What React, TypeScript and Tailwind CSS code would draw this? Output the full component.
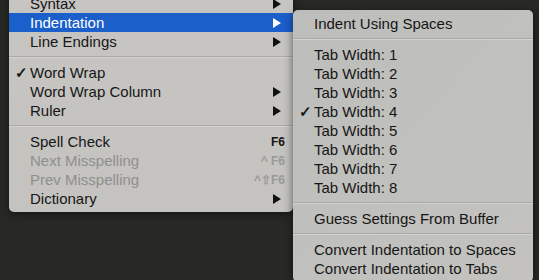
import type { ReactNode } from 'react';

type Item =
  | { kind: 'sep' }
  | {
      kind: 'item';
      label: string;
      checked?: boolean;
      active?: boolean;
      disabled?: boolean;
      submenu?: boolean;
      shortcut?: ReactNode;
    };

const mainItems: Item[] = [
  { kind: 'item', label: 'Syntax', submenu: true },
  { kind: 'item', label: 'Indentation', submenu: true, active: true },
  { kind: 'item', label: 'Line Endings', submenu: true },
  { kind: 'sep' },
  { kind: 'item', label: 'Word Wrap', checked: true },
  { kind: 'item', label: 'Word Wrap Column', submenu: true },
  { kind: 'item', label: 'Ruler', submenu: true },
  { kind: 'sep' },
  { kind: 'item', label: 'Spell Check', shortcut: 'F6' },
  { kind: 'item', label: 'Next Misspelling', disabled: true, shortcut: '^ F6' },
  { kind: 'item', label: 'Prev Misspelling', disabled: true, shortcut: '^⇧F6' },
  { kind: 'item', label: 'Dictionary', submenu: true },
];

const subItems: Item[] = [
  { kind: 'item', label: 'Indent Using Spaces' },
  { kind: 'sep' },
  ...[1, 2, 3, 4, 5, 6, 7, 8].map(
    (n): Item => ({ kind: 'item', label: `Tab Width: ${n}`, checked: n === 4 }),
  ),
  { kind: 'sep' },
  { kind: 'item', label: 'Guess Settings From Buffer' },
  { kind: 'sep' },
  { kind: 'item', label: 'Convert Indentation to Spaces' },
  { kind: 'item', label: 'Convert Indentation to Tabs' },
];

function Arrow({ white }: { white?: boolean }) {
  return (
    <svg width="8" height="10" viewBox="0 0 8 10" className="shrink-0">
      <path d="M0 0 L8 5 L0 10 Z" fill={white ? '#ffffff' : '#111111'} />
    </svg>
  );
}

function MenuRow({ item }: { item: Item }) {
  if (item.kind === 'sep') {
    return (
      <div className="h-[12px] flex flex-col justify-center">
        <div className="h-px bg-[#a9a9a6]" />
        <div className="h-px bg-[#d2d2cf]" />
      </div>
    );
  }
  const color = item.active
    ? 'text-white bg-[#1b5fcb]'
    : item.disabled
      ? 'text-[#8f8f8c]'
      : 'text-[#161616]';
  return (
    <div className={`h-[19px] flex items-center pr-3 ${color}`}>
      <span className="w-[21px] pl-[6px] text-[15px] font-bold leading-none">
        {item.checked ? '✓' : ''}
      </span>
      <span className="flex-1 text-[15px] leading-none whitespace-nowrap">{item.label}</span>
      {item.submenu && <Arrow white={item.active} />}
      {item.shortcut && (
        <span
          className={`text-[12px] font-bold leading-none -mr-1 ${
            item.disabled ? 'text-[#9a9a97]' : 'text-[#161616]'
          }`}
        >
          {item.shortcut}
        </span>
      )}
    </div>
  );
}

export default function App() {
  return (
    <div
      className="relative w-[539px] h-[280px] overflow-hidden bg-[#282824]"
      style={{ fontFamily: '"Liberation Sans", Arial, sans-serif' }}
    >
      {/* Main menu */}
      <div className="absolute left-[9px] top-[-10px] w-[284px] py-1 rounded-[5px] bg-gradient-to-b from-[#c6c5c2] to-[#c4c3c0] shadow-[0_2px_8px_rgba(0,0,0,0.5)]">
        {mainItems.map((item, i) => (
          <MenuRow key={i} item={item} />
        ))}
      </div>

      {/* Indentation submenu */}
      <div className="absolute left-[293px] top-[10px] w-[240px] py-1 rounded-[5px] bg-gradient-to-br from-[#bdbebb] to-[#c3c2bf] shadow-[0_3px_10px_rgba(0,0,0,0.55)]">
        {subItems.map((item, i) => (
          <MenuRow key={i} item={item} />
        ))}
      </div>
    </div>
  );
}
